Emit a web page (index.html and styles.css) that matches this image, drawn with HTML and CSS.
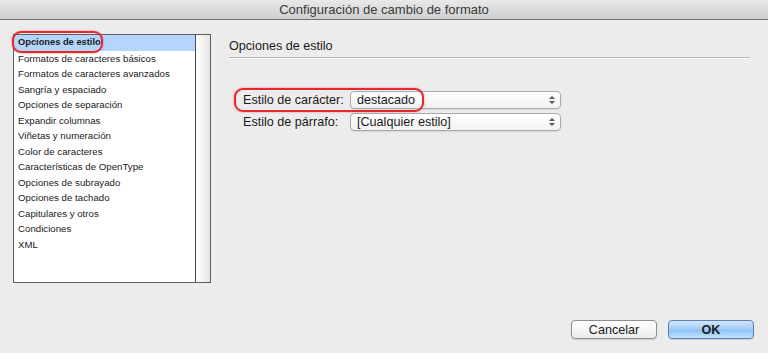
FILE: index.html
```html
<!DOCTYPE html>
<html lang="es">
<head>
    <title>Configuración de cambio de formato</title>
    <meta charset="utf-8">
    <link rel="stylesheet" href="styles.css">
</head>
<body>
    <header class="titlebar">Configuración de cambio de formato</header>

    <main class="main">
        <div class="list">
            <ul class="list-items">
                <li class="item selected">Opciones de estilo<span class="mark mark-list"></span></li>
                <li class="item">Formatos de caracteres básicos</li>
                <li class="item">Formatos de caracteres avanzados</li>
                <li class="item">Sangría y espaciado</li>
                <li class="item">Opciones de separación</li>
                <li class="item">Expandir columnas</li>
                <li class="item">Viñetas y numeración</li>
                <li class="item">Color de caracteres</li>
                <li class="item">Características de OpenType</li>
                <li class="item">Opciones de subrayado</li>
                <li class="item">Opciones de tachado</li>
                <li class="item">Capitulares y otros</li>
                <li class="item">Condiciones</li>
                <li class="item">XML</li>
            </ul>
            <div class="scrollbar"></div>
        </div>

        <section class="pane">
            <h2 class="pane-title">Opciones de estilo</h2>
            <div class="fields">
                <div class="field">
                    <span class="label">Estilo de carácter:</span>
                    <div class="select">destacado<span class="arrows"></span></div>
                    <span class="mark mark-field"></span>
                </div>
                <div class="field">
                    <span class="label">Estilo de párrafo:</span>
                    <div class="select">[Cualquier estilo]<span class="arrows"></span></div>
                </div>
            </div>
        </section>
    </main>

    <footer class="footer">
        <button type="button" class="btn">Cancelar</button>
        <button type="button" class="btn btn-default">OK</button>
    </footer>
</body>
</html>
```

FILE: styles.css
```css
body {
    font-family: 'Liberation Sans', Arial, sans-serif;
    color: #1a1a1a;
    background-color: #ececec;
    margin: 0;
    padding: 0;
    height: 353px;
    display: flex;
    flex-direction: column;
    overflow: hidden;
}

.titlebar {
    height: 19px;
    line-height: 19px;
    text-align: center;
    font-size: 13px;
    color: #3a3a3a;
    background: linear-gradient(#e9e9e9, #cfcfcf);
    border-bottom: 1px solid #707070;
}

.main {
    flex: 1;
    display: flex;
    padding: 14px 0 0 13px;
}

.list {
    position: relative;
    display: flex;
    width: 196px;
    height: 247px;
    border: 1px solid #5e5e5e;
    background: white;
}

.list-items {
    list-style: none;
    margin: 0;
    padding: 0;
    flex: 1;
}

.item {
    position: relative;
    height: 15.5px;
    line-height: 15.5px;
    padding-left: 4px;
    font-size: 9.7px;
    white-space: nowrap;
}

.item.selected {
    background: #b5d5fd;
    font-weight: bold;
    font-size: 9.3px;
}

.scrollbar {
    width: 14px;
    border-left: 1px solid #4a4a4a;
    background: linear-gradient(to right, #ffffff, #e4e4e4);
}

/* red highlight rings drawn over the screenshot */
.mark {
    position: absolute;
    border: 2px solid #e8262b;
    border-radius: 9px;
    box-shadow: 0 0 2px rgba(232, 38, 43, 0.6);
    pointer-events: none;
}

.mark-list {
    left: -2px;
    top: -4px;
    width: 87px;
    height: 18px;
}

.mark-field {
    left: -9px;
    top: -3px;
    width: 186px;
    height: 20px;
}

.pane {
    margin-left: 18px;
    width: 521px;
}

.pane-title {
    margin: 0;
    padding-top: 4px;
    height: 19px;
    line-height: 16px;
    font-size: 12.6px;
    font-weight: normal;
    border-bottom: 1px solid #b9b9b9;
    box-shadow: 0 1px 0 #fafafa;
}

.fields {
    padding: 33px 0 0 14px;
    display: flex;
    flex-direction: column;
    gap: 4px;
}

.field {
    position: relative;
    display: flex;
    align-items: center;
    height: 18px;
}

.label {
    width: 107px;
    font-size: 12.6px;
}

.select {
    position: relative;
    width: 203px;
    height: 16px;
    line-height: 16px;
    padding-left: 6px;
    font-size: 12.6px;
    border: 1px solid #a9a9a9;
    border-radius: 4px;
    background: linear-gradient(#ffffff, #f1f1f1);
    box-shadow: 0 1px 1px rgba(0, 0, 0, 0.08);
}

.arrows {
    position: absolute;
    right: 5px;
    top: 4px;
    width: 0;
    height: 0;
    border-left: 3px solid transparent;
    border-right: 3px solid transparent;
    border-bottom: 3px solid #555;
}

.arrows:after {
    content: "";
    position: absolute;
    left: -3px;
    top: 5px;
    border-left: 3px solid transparent;
    border-right: 3px solid transparent;
    border-top: 3px solid #555;
}

.footer {
    display: flex;
    justify-content: flex-end;
    gap: 11px;
    padding: 0 14px 14px 0;
}

.btn {
    width: 86px;
    height: 19px;
    padding: 0;
    font-family: 'Liberation Sans', Arial, sans-serif;
    font-size: 12.6px;
    color: #1a1a1a;
    border: 1px solid #8e8e8e;
    border-radius: 4px;
    background: linear-gradient(#ffffff, #ececec);
    box-shadow: 0 1px 1px rgba(0, 0, 0, 0.12);
}

.btn-default {
    font-weight: bold;
    border-color: #5a7fb8;
    background: linear-gradient(#d3e6fb, #9fcbf6 50%, #8ac0f4 51%, #c3e2fd);
}
```
